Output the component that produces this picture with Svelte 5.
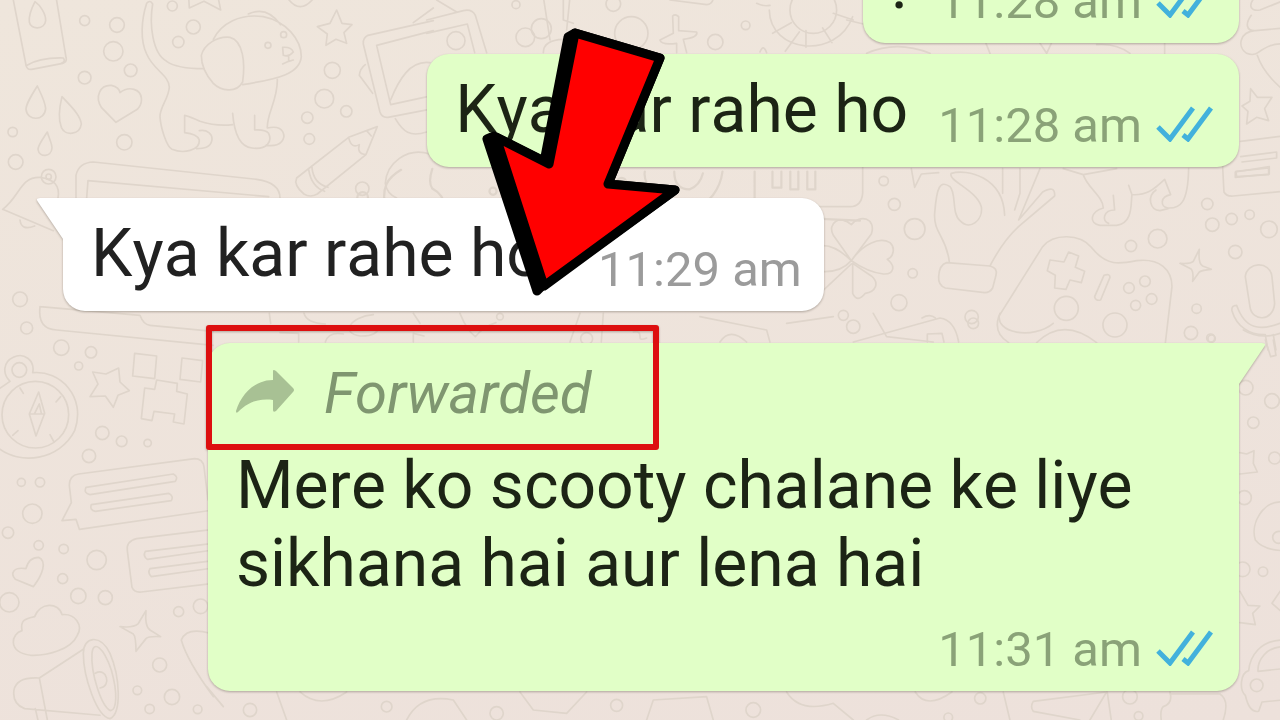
<script lang="ts">
  type Message = {
    text: string;
    time: string;
    mine: boolean;
    tail?: boolean;
    forwarded?: boolean;
  };

  type Doodle = {
    place: string;
    dots: number[][];
    lines: string[];
  };

  const messages: Message[] = [
    { text: '.', time: '11:28 am', mine: true },
    { text: 'Kya kar rahe ho', time: '11:28 am', mine: true },
    { text: 'Kya kar rahe ho', time: '11:29 am', mine: false, tail: true },
    {
      text: 'Mere ko scooty chalane ke liye sikhana hai aur lena hai',
      time: '11:31 am',
      mine: true,
      tail: true,
      forwarded: true
    }
  ];

  // wallpaper doodles, drawn at three times their size
  const doodles: Doodle[] = [
    {
      place: 'translate(0 0) scale(0.3333)',
      dots: [
        [254, 62, 15], [351, 75, 22], [340, 154, 29], [392, 211, 19], [254, 233, 19], [373, 427, 23],
        [38, 396, 14], [47, 486, 22], [517, 18, 15], [580, 81, 21], [535, 126, 17], [804, 136, 9],
        [851, 104, 9], [997, 211, 24], [973, 296, 28], [1039, 334, 17], [922, 353, 17], [928, 417, 16],
        [1087, 566, 20], [146, 530, 22], [146, 530, 8]
      ],
      lines: [
        'M38 -10L78 195Q80 210 95 208L188 190Q202 186 198 172L168 -10M78 197Q120 172 190 174Q198 184 184 190',
        'M105 5C92 30 86 48 88 66C92 90 134 90 137 62C138 42 120 15 105 5Z',
        'M112 258C92 290 78 312 78 328C82 364 134 364 137 326C136 306 124 284 112 258Z',
        'M186 290C176 330 174 356 184 382C196 410 240 404 244 372C242 346 212 318 186 290Z',
        'M142 396C126 420 114 436 114 448C118 474 154 472 156 444C156 430 146 412 142 396Z',
        'M348 367L304 322C284 290 300 254 334 256Q358 262 360 278Q380 262 402 268C430 276 430 310 412 328Z',
        'M440 10Q450 -2 458 12C448 70 456 160 500 184Q530 206 612 206M440 10C424 60 420 120 440 162C460 210 508 226 508 262C506 296 480 320 480 350C482 384 500 440 516 448C550 462 600 452 598 420Q592 402 554 398V346Q572 350 600 364Q650 380 698 374',
        'M598 392C622 388 638 402 636 420C632 444 610 446 590 446M698 340C702 390 716 440 756 444C800 450 818 426 806 400Q796 388 764 390V346M832 238C834 300 800 340 802 384Q850 374 852 410C846 438 820 438 798 436',
        'M640 118C664 70 720 40 790 50C860 64 904 120 904 170C900 220 840 236 728 254M745 42Q800 16 842 74',
        'M604 166C612 134 650 108 690 112C730 122 736 190 728 246C708 282 662 272 640 250C618 226 604 200 604 166Z',
        'M848 142Q874 140 880 156Q866 172 850 166ZM866 168V184L880 180M866 184L848 192',
        'M1010 30L1026 70L1056 74L1032 98L1040 130L1008 118L978 136L982 102L952 80L990 70Z',
        'M566 -10L568 24L612 4L662 30L654 -10M864 -4Q900 44 940 -4',
        'M1300 62L1104 106Q1088 114 1090 132L1140 336Q1146 354 1164 352L1300 326M1300 92L1130 136L1172 314L1300 286M1172 300C1196 240 1230 180 1290 188M1240 68L1300 24M1096 194Q1080 206 1078 226L1118 280M1186 356C1210 396 1230 412 1280 396',
        'M890 534L1046 412L1132 380L1098 464L952 582Q930 594 912 582Q880 556 890 534ZM1046 412Q1054 448 1078 434Q1070 462 1098 464M1100 392L1114 408M936 502Q940 550 984 562M926 508Q934 560 974 574',
        'M1290 462C1220 440 1160 490 1156 550Q1160 580 1190 594',
        'M228 594V526Q236 488 280 486L770 538Q840 548 840 594M260 594L264 542L806 590',
        'M8 628C60 590 60 530 120 532Q184 540 174 594M8 628L160 692M60 660Q64 694 104 678'
      ]
    },
    {
      place: 'translate(0 300) scale(0.3333)',
      dots: [
        [80, 84, 18], [184, 143, 23], [273, 157, 17], [236, 198, 12], [106, 344, 100], [58, 210, 22],
        [307, 399, 20], [365, 424, 16], [443, 429, 11], [267, 468, 20], [64, 547, 12], [120, 547, 14],
        [97, 641, 29], [24, 698, 17], [116, 736, 14], [191, 747, 14], [290, 780, 29], [188, 836, 15],
        [28, 907, 29], [235, 888, 23], [316, 893, 21], [536, 935, 15], [602, 919, 22], [479, 1095, 21],
        [412, 1171, 13], [516, 1191, 23], [449, 1227, 14], [593, 1228, 13], [60, -2, 22]
      ],
      lines: [
        'M120 20Q112 88 170 90L640 136M120 20L420 46Q430 74 450 76L640 94',
        'M-10 440C60 500 180 480 224 392C260 290 180 210 98 218C106 180 70 156 40 172C10 186 6 220 30 244L-10 272',
        'M116 276L88 342L108 408L134 340ZM88 342H134M104 340L118 312L124 340M60 264L70 280M182 290L168 306M38 406L54 392M150 404L162 426',
        'M356 204L360 246L388 272L354 286L340 322L316 288L270 290L294 252L278 216L318 222Z',
        'M404 160L470 168L464 236L398 228ZM546 174L608 182L602 246L540 238ZM470 240L532 250L530 274L562 282L552 372L520 366L524 342L462 334L456 362L424 356L434 264L464 268Z',
        'M236 522L584 476Q608 476 612 500L624 600M236 522Q208 526 208 556L214 608L186 662L228 658L238 688L640 630',
        'M258 562L520 522Q536 530 526 544L270 584Q250 580 258 562ZM274 614L506 580Q522 588 514 602L286 634Q268 630 274 614Z',
        'M640 688L410 716Q378 724 382 752L396 862Q402 878 424 876L640 850M640 730L436 754Q428 768 442 778L640 750M640 782L450 806Q442 818 454 830L640 804',
        'M100 860L46 838C30 820 40 800 78 806Q86 772 116 772C142 784 128 824 100 860Z',
        'M66 992C60 960 76 956 104 950C120 906 176 906 186 944C226 940 250 976 232 1006C212 1050 140 1068 92 1066C20 1056 34 1000 66 992Z',
        'M438 932Q434 980 450 990L482 1010Q446 1008 438 1016L408 1054Q408 1010 400 1002L360 980Q400 984 414 972Z',
        'M250 1048L118 1134Q50 1130 42 1170Q36 1212 74 1226L300 1246M118 1134L144 1270M106 1226L116 1270',
        'M250 1060C250 1010 300 1000 330 1060C360 1130 366 1240 330 1256C290 1250 250 1130 250 1060ZM276 1060C280 1020 310 1040 334 1110C354 1180 350 1230 332 1232C304 1220 272 1120 276 1060ZM286 1120C320 1100 336 1160 300 1164',
        'M640 1190Q560 1080 544 1020Q560 980 630 1000M620 1160L670 1220'
      ]
    },
    {
      place: 'translate(820 160) scale(0.3333)',
      dots: [
        [191, 63, 14], [223, 133, 18], [284, 207, 31], [278, 340, 14], [237, 428, 24], [70, 466, 15],
        [455, 471, 20], [739, 445, 36], [885, 495, 36], [927, 384, 16], [975, 364, 16], [995, 417, 16],
        [947, 436, 15], [933, 258, 17], [1013, 236, 28], [1162, 132, 17], [1177, 194, 20], [1235, 177, 17],
        [1289, 164, 14], [1347, 208, 25], [1246, 276, 20], [1130, 446, 14], [1113, 519, 20], [1175, 536, 11]
      ],
      lines: [
        'M128 0V100Q124 140 90 140H-20',
        'M94 302L40 226C20 190 60 162 94 194C120 160 170 176 154 222ZM94 302C130 250 180 230 210 248C226 262 222 290 202 298C228 318 222 344 190 342C150 338 120 320 94 302ZM98 310V400Q112 430 136 400C166 396 180 370 154 348ZM94 302Q40 250 0 258M94 302Q60 340 0 334M94 312L0 400',
        'M274 26L284 82L304 42L356 38M388 306C380 230 340 220 344 160C350 80 360 60 390 80C410 100 394 160 420 182C450 214 490 180 484 140C470 90 380 60 394 40C440 26 550 50 554 166M548 26V100M600 26V100L584 150M660 26L596 180L668 96Q706 74 704 108L600 196Q550 240 510 318',
        'M380 308L510 318Q534 324 528 346L518 384Q510 398 494 398L376 384Q354 376 356 350Q358 314 380 308Z',
        'M536 470L668 260C700 220 780 220 814 262C860 320 900 312 950 302C1020 294 1056 330 1056 380L1036 550M536 470Q520 520 566 548M650 548Q730 470 830 548',
        'M746 276L776 288L766 322L794 334L784 368L750 360L738 388L704 384L706 346L682 332L690 300L732 306ZM852 346Q870 340 870 352L842 420Q826 424 824 410Z',
        'M730 26L790 44C800 80 850 110 850 144C810 156 806 190 840 196H890C940 190 932 130 936 104C980 106 1000 90 1034 58L1052 104C1020 110 1020 140 1044 144C1080 146 1104 130 1106 26M880 106L884 150C850 150 844 184 866 190M926 76L936 104M1008 90C980 110 990 150 1020 152L1044 146M790 44L890 26',
        'M1208 20L1212 96Q1220 110 1240 108L1390 94M1246 36L1348 20V42L1246 52Z',
        'M1138 268Q1134 310 1148 318L1174 328Q1146 330 1138 336L1118 364Q1122 334 1112 326L1080 310Q1112 312 1120 304Z',
        'M1276 350C1280 306 1350 300 1356 350L1364 430C1360 486 1296 486 1290 440ZM1250 436Q1234 436 1236 452C1250 500 1290 526 1336 524L1344 570M1250 436C1276 510 1320 512 1380 490M1360 524L1368 570',
        'M100 546L360 474Q404 480 416 546M306 474Q330 460 346 474M322 546V522L366 520L372 546'
      ]
    },
    {
      place: 'translate(850 0) scale(0.3333)',
      dots: [[1380, 20, 16]],
      lines: [
        'M1216 -10C1190 20 1206 34 1230 30L1300 2M1204 46C1186 70 1188 92 1214 92C1170 96 1160 140 1190 160Q1210 168 1224 158C1250 140 1270 130 1300 132M1216 92L1300 84M1222 166Q1240 220 1300 270',
        'M1202 266L1222 292L1266 292L1244 326L1256 362L1220 352L1190 372L1194 334L1176 318L1200 304Z',
        'M1172 424L1300 408M1172 470L1280 456V474L1176 486M1158 514L1256 504V524L1160 530Z',
        'M50 160Q140 120 240 160M408 130L420 160M570 130L590 160L604 130M740 134Q800 130 840 160M944 130V160M-10 60L40 72'
      ]
    },
    {
      place: 'translate(430 0) scale(0.3333)',
      dots: [
        [258, 14, 12], [550, 12, 22], [78, 122, 27], [286, 112, 28], [334, 86, 30], [604, 100, 50],
        [856, 126, 23], [947, 76, 13], [1150, 30, 70]
      ],
      lines: [
        'M-10 60L100 32Q126 26 136 46L170 158M-10 100L112 72L134 158M340 -10L360 120M410 90L420 -10M400 -10V60L430 70M20 0L80 36M340 158Q340 120 400 118',
        'M728 48Q736 40 746 50V92L800 96Q806 112 760 118L770 158M728 48L730 100L690 120Q694 136 740 130V158',
        'M720 0L830 14Q850 12 850 -10M1018 30C1020 160 1220 180 1268 50M980 10Q1000 20 1020 16M1028 100L1084 68M1066 154L1108 96M1128 92V142M1178 84L1206 128M1210 40L1270 60M990 156Q1000 130 1010 158'
      ]
    },
    {
      place: 'translate(160 160) scale(0.4464)',
      dots: [[454, 84, 12], [746, 70, 8], [1034, 50, 10], [1296, 106, 12]],
      lines: [
        'M506 112C494 60 510 40 540 22M636 112Q640 80 610 64Q600 50 610 20M1086 26C1080 60 1130 110 1190 108C1230 106 1256 60 1260 26M1152 26Q1152 66 1186 66Q1210 56 1216 30M1332 26V112M1372 26V62H1392V26M1412 26V66H1430V26M1450 26V66H1468V26M1480 132L1568 136'
      ]
    },
    {
      place: 'translate(200 310) scale(0.3333)',
      dots: [[900, 20, 10], [1160, 86, 18], [1960, 50, 20], [2320, 40, 16]],
      lines: [
        'M208 10L212 40M240 68L296 70V96M312 10Q320 40 376 42M376 96Q386 64 430 72M520 14C450 20 420 70 480 78Q530 80 540 50M640 10L660 40M640 96V70L672 78M780 10Q800 60 826 80Q850 50 888 38M1140 10L1110 96M1210 10L1204 96M1300 66C1340 60 1300 100 1340 84',
        'M1500 20L1700 60L1710 96M1560 96Q1590 50 1640 96M1760 40L1900 20M2020 10L2060 80L2200 96M2400 10C2380 70 2500 90 2560 40'
      ]
    },
    {
      place: 'translate(1200 330) scale(0.3333)',
      dots: [[32, 24, 12], [137, 173, 22], [216, 213, 22], [160, 278, 17], [224, 384, 18], [133, 503, 21], [128, 718, 22], [189, 725, 14], [236, 622, 18], [170, 1066, 19]],
      lines: [
        'M120 368L140 372L162 362L160 400L172 426L120 432M196 30L212 80L228 76L220 30M130 0Q180 30 240 10',
        'M250 516C190 510 150 580 166 630Q190 660 250 662M120 784L144 826L180 828L158 850L166 884L120 878M250 770L216 820L250 850',
        'M250 930C180 930 150 980 146 1022C120 1030 118 1080 136 1096Q148 1150 176 1144L186 1116L250 1110M250 950C200 950 172 990 174 1024L250 1016'
      ]
    },
    {
      place: 'translate(200 600) scale(0.3333)',
      dots: [[150, 330, 20], [560, 320, 16], [890, 340, 20], [1250, 316, 18], [1660, 330, 22], [2341, 295, 17], [2245, 352, 13], [2790, 290, 22], [2816, 348, 13]],
      lines: [
        'M230 276L260 360M300 276Q360 330 440 276M620 360Q660 280 760 300L800 360M960 276L1000 330L1100 340L1160 276M1340 360L1360 300L1520 290L1540 360M1760 276Q1800 340 1900 310L1960 360',
        'M2146 276Q2180 330 2256 276M2000 360Q2040 330 2096 360M2410 276L2430 360M2720 276L2500 304Q2490 320 2500 334L2640 360M2720 276L2670 360M2722 276L2734 360M2910 276Q2920 310 2890 320Q2880 330 2884 360M2910 282H3060Q3090 300 3070 360'
      ]
    }
  ];
</script>

<main class="chat">
  <svg class="wallpaper" viewBox="0 0 1280 720" preserveAspectRatio="xMidYMid slice" aria-hidden="true">
    {#each doodles as doodle}
      <g transform={doodle.place}>
        {#each doodle.dots as [cx, cy, r]}
          <circle {cx} {cy} {r} />
        {/each}
        {#each doodle.lines as d}
          <path {d} />
        {/each}
      </g>
    {/each}
  </svg>

  {#each messages as message}
    <article class="bubble" class:mine={message.mine} class:tail={message.tail} class:long={message.forwarded}>
      {#if message.tail}
        <svg class="corner" viewBox="0 0 28 42" aria-hidden="true">
          <path d="M28 0H4Q-1 0 2 4L27 41H28Z" />
        </svg>
      {/if}
      {#if message.forwarded}
        <div class="forwarded">
          <svg class="share" viewBox="0 0 58 43" aria-hidden="true">
            <path d="M37 1Q37 -1 40 1L57 18Q59 20 57 22L40 41Q37 43 37 40V30C22 28 11 33 2 42Q0 44 0 41C5 25 18 10 37 10Z" />
          </svg>
          <em>Forwarded</em>
          <span class="marker"></span>
        </div>
      {/if}
      <p>{message.text}</p>
      <footer>
        <time>{message.time}</time>
        {#if message.mine}
          <svg class="ticks" viewBox="0 0 57 36" role="img" aria-label="Read">
            <path d="M2 21L14 33L37 2M27 29L32 33L55 2" />
          </svg>
        {/if}
      </footer>
    </article>
  {/each}

  <svg class="arrow" viewBox="480 24 204 276" aria-hidden="true">
    <path class="side" d="M568 37L575 33L660 58L608 184L675 190L542 286L537 291L487 139L494 136L548 163L544 162Z" />
    <path class="face" d="M575 33L660 58L608 184L675 190L544 286L496 137L549 164Z" />
  </svg>
</main>

<style>
  :global(body) {
    margin: 0;
  }

  .chat {
    position: relative;
    display: flex;
    flex-direction: column;
    justify-content: flex-end;
    align-items: flex-start;
    height: 100vh;
    box-sizing: border-box;
    padding: 0 41px 29px 63px;
    overflow: hidden;
    background: linear-gradient(170deg, #efe6dc, #ede1db);
    font-family: Roboto, sans-serif;
    font-kerning: none;
  }

  .wallpaper {
    position: absolute;
    inset: 0;
    width: 100%;
    height: 100%;
    fill: none;
    stroke: #dfd5cb;
    stroke-width: 5;
    stroke-linecap: round;
    stroke-linejoin: round;
  }

  .bubble {
    --fill: #fff;
    position: relative;
    display: flex;
    flex-shrink: 0;
    box-sizing: border-box;
    margin-top: 31px;
    padding: 17px 22px 12px 28px;
    gap: 54px;
    border-radius: 22px;
    background: var(--fill);
    filter: drop-shadow(0 1px 1px rgba(80, 70, 60, 0.4));
    color: #212121;
  }

  .mine {
    --fill: #e1ffc7;
    align-self: flex-end;
    margin-top: 11px;
    margin-left: 145px;
    padding-right: 26px;
    gap: 30px;
    color: #1c2415;
  }

  .tail {
    border-top-left-radius: 0;
  }

  .mine.tail {
    border-radius: 22px 0 22px 22px;
  }

  .long {
    flex-direction: column;
    margin-top: 32px;
    gap: 0;
  }

  .corner {
    position: absolute;
    top: 0;
    right: calc(100% - 1px);
    width: 28px;
    height: 42px;
    fill: var(--fill);
  }

  .mine .corner {
    right: auto;
    left: calc(100% - 1px);
    transform: scaleX(-1);
  }

  .forwarded {
    position: relative;
    display: flex;
    align-items: center;
    gap: 30px;
    margin-bottom: 21px;
    color: #7f9670;
    font-size: 58px;
    line-height: 66px;
  }

  .share {
    width: 58px;
    height: 43px;
    margin-bottom: 4px;
    fill: #a8c194;
  }

  .marker {
    position: absolute;
    top: -35px;
    left: -30px;
    width: 453px;
    height: 125px;
    box-sizing: border-box;
    border: 6px solid #dd0f0f;
    border-radius: 3px;
  }

  p {
    margin: 0 0 6px;
    font-size: 66px;
    line-height: 78px;
  }

  .long p {
    margin-bottom: 18px;
  }

  footer {
    display: flex;
    align-items: center;
    align-self: flex-end;
    gap: 14px;
    color: #9b9b9b;
    font-size: 49px;
    line-height: 58px;
    white-space: nowrap;
  }

  .mine footer {
    color: #8aa278;
  }

  .ticks {
    width: 57px;
    height: 36px;
    margin-bottom: 4px;
    fill: none;
    stroke: #42b1dc;
    stroke-width: 5;
  }

  .arrow {
    position: absolute;
    top: 24px;
    left: 480px;
    width: 204px;
    height: 276px;
    stroke: #000;
    stroke-width: 9;
    stroke-linejoin: round;
  }

  .face {
    fill: #f00;
  }
</style>
